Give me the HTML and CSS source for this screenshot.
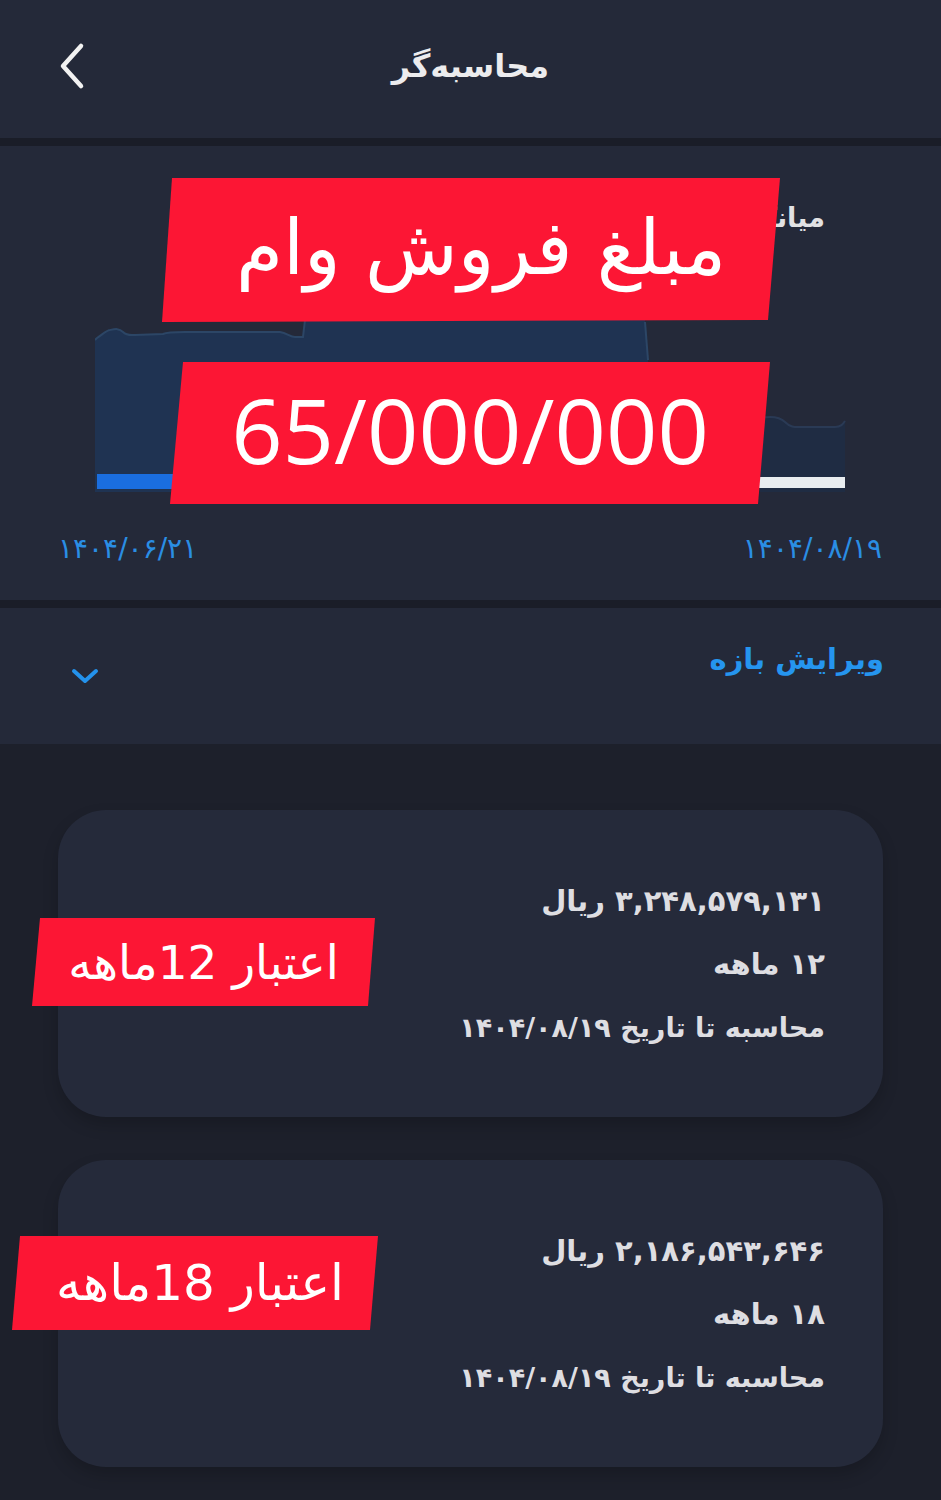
FILE: index.html
```html
<!DOCTYPE html>
<html lang="fa" dir="rtl">
<head>
<meta charset="utf-8">
<title>محاسبه‌گر</title>
<link rel="stylesheet" href="styles.css">
</head>
<body>
<div class="page">
  <header class="topbar">
    <div class="topbar-side"></div>
    <h1 class="title">محاسبه‌گر</h1>
    <div class="topbar-side back">
      <svg width="34" height="50" viewBox="0 0 34 50"><path d="M25 5 L7 25 L25 45" fill="none" stroke="#f2f2f2" stroke-width="4.5" stroke-linecap="round" stroke-linejoin="round"/></svg>
    </div>
  </header>

  <section class="chart-section">
    <div class="chart-label">میانگین قیمت</div>
    <svg class="chart" width="752" height="172" viewBox="0 0 752 172">
      <path d="M0 20 L2 18 C8 14 12 10 15 10 C20 9 24 8 28 12 C32 16 36 15 40 15 L68 14 C72 12 80 12 90 12 L185 12 C192 13 195 17 200 17 L208 17 L210 0 L550 0 L553 40 L553 172 L0 172 Z" fill="#1f3352"/>
      <path d="M0 20 L2 18 C8 14 12 10 15 10 C20 9 24 8 28 12 C32 16 36 15 40 15 L68 14 C72 12 80 12 90 12 L185 12 C192 13 195 17 200 17 L208 17 L210 0" fill="none" stroke="#2c4666" stroke-width="2"/>
      <path d="M550 2 L553 40" fill="none" stroke="#2c4666" stroke-width="2"/>
      <path d="M665 98 C675 96 684 96 690 102 C696 108 700 107 708 107 L740 107 C746 107 748 104 750 101 L750 172 L665 172 Z" fill="#1f2c43"/>
      <path d="M665 98 C675 96 684 96 690 102 C696 108 700 107 708 107 L740 107 C746 107 748 104 750 101" fill="none" stroke="#2a3a55" stroke-width="2"/>
      <rect x="2" y="154" width="300" height="15" fill="#1a6ee0"/>
      <rect x="420" y="157" width="330" height="11" fill="#e9edf0"/>
    </svg>
    <div class="dates">
      <span>۱۴۰۴/۰۸/۱۹</span>
      <span>۱۴۰۴/۰۶/۲۱</span>
    </div>
  </section>

  <section class="edit-range">
    <span class="edit-label">ویرایش بازه</span>
    <svg class="chev-down" width="30" height="20" viewBox="0 0 30 20"><path d="M4 5 L15 15 L26 5" fill="none" stroke="#2492ec" stroke-width="4" stroke-linecap="round" stroke-linejoin="round"/></svg>
  </section>

  <main class="cards">
    <div class="card">
      <div class="line">۳,۲۴۸,۵۷۹,۱۳۱ ریال</div>
      <div class="line">۱۲ ماهه</div>
      <div class="line small">محاسبه تا تاریخ ۱۴۰۴/۰۸/۱۹</div>
    </div>
    <div class="card">
      <div class="line">۲,۱۸۶,۵۴۳,۶۴۶ ریال</div>
      <div class="line">۱۸ ماهه</div>
      <div class="line small">محاسبه تا تاریخ ۱۴۰۴/۰۸/۱۹</div>
    </div>
  </main>

  <div class="banner banner-title">مبلغ فروش وام</div>
  <div class="banner banner-amount"><span dir="ltr">65/000/000</span></div>
  <div class="banner banner-12">اعتبار 12ماهه</div>
  <div class="banner banner-18">اعتبار 18ماهه</div>
</div>
</body>
</html>
```

FILE: styles.css
```css
* { box-sizing: border-box; }
html, body { margin: 0; padding: 0; }
body {
  background: #1d202b;
  font-family: "DejaVu Sans", "Noto Sans", sans-serif;
  color: #e6e6e8;
}
.page {
  position: relative;
  width: 941px;
  min-height: 1500px;
  background: #1d202b;
}
.topbar {
  height: 146px;
  background: #242939;
  border-bottom: 8px solid #1a1d28;
  display: grid;
  grid-template-columns: 120px 1fr 120px;
  align-items: center;
}
.title {
  margin: 0;
  text-align: center;
  font-size: 32px;
  font-weight: bold;
  color: #ececee;
  padding-bottom: 6px;
}
.back {
  display: flex;
  justify-content: flex-end;
  padding-left: 56px;
  padding-bottom: 6px;
}
.chart-section {
  background: #242939;
  border-bottom: 8px solid #1a1d28;
  padding: 52px 0 31px 0;
}
.chart-label {
  height: 40px;
  line-height: 40px;
  padding-right: 116px;
  font-size: 27px;
  font-weight: bold;
  color: #e2e2e4;
}
.chart {
  display: block;
  margin: 82px 94px 0 0;
}
.dates {
  margin-top: 37px;
  height: 40px;
  line-height: 40px;
  display: flex;
  justify-content: space-between;
  padding: 0 59px 0 58px;
  color: #2a8ee4;
  font-size: 28px;
  letter-spacing: 3px;
}
.edit-range {
  height: 136px;
  background: #242939;
  display: flex;
  justify-content: space-between;
  align-items: center;
  padding: 0 57px 0 70px;
}
.edit-label {
  color: #2595ef;
  font-size: 29px;
  font-weight: bold;
  margin-bottom: 34px;
}
.chev-down { display: block; }
.cards {
  padding: 66px 58px 0 58px;
  display: flex;
  flex-direction: column;
  gap: 43px;
}
.card {
  height: 307px;
  background: #252a3a;
  border-radius: 48px;
  padding: 60px 58px 0 0;
  box-shadow: 0 8px 16px rgba(0,0,0,0.18);
}
.line {
  height: 63px;
  line-height: 63px;
  font-size: 29px;
  font-weight: bold;
  color: #dedee2;
}
.line.small { font-size: 27px; }

.banner {
  position: absolute;
  background: #fc1634;
  color: #ffffff;
  display: flex;
  align-items: center;
  justify-content: center;
}
.banner-title {
  left: 162px; top: 178px; width: 618px; height: 144px;
  clip-path: polygon(10px 0, 100% 0, 606px 142px, 0 100%);
  font-size: 76px;
  padding-left: 20px;
  padding-bottom: 6px;
}
.banner-amount {
  left: 170px; top: 362px; width: 600px; height: 142px;
  clip-path: polygon(13px 0, 100% 0, 588px 100%, 0 100%);
  font-family: "Open Sans", "Noto Sans", sans-serif;
  font-size: 90px;
  padding-bottom: 8px;
}
.banner-12 {
  left: 32px; top: 918px; width: 343px; height: 88px;
  clip-path: polygon(8px 0, 100% 0, 336px 100%, 0 100%);
  font-size: 47px;
}
.banner-18 {
  left: 12px; top: 1236px; width: 366px; height: 94px;
  clip-path: polygon(8px 0, 100% 0, 358px 100%, 0 100%);
  font-size: 50px;
  padding-left: 10px;
}
```
